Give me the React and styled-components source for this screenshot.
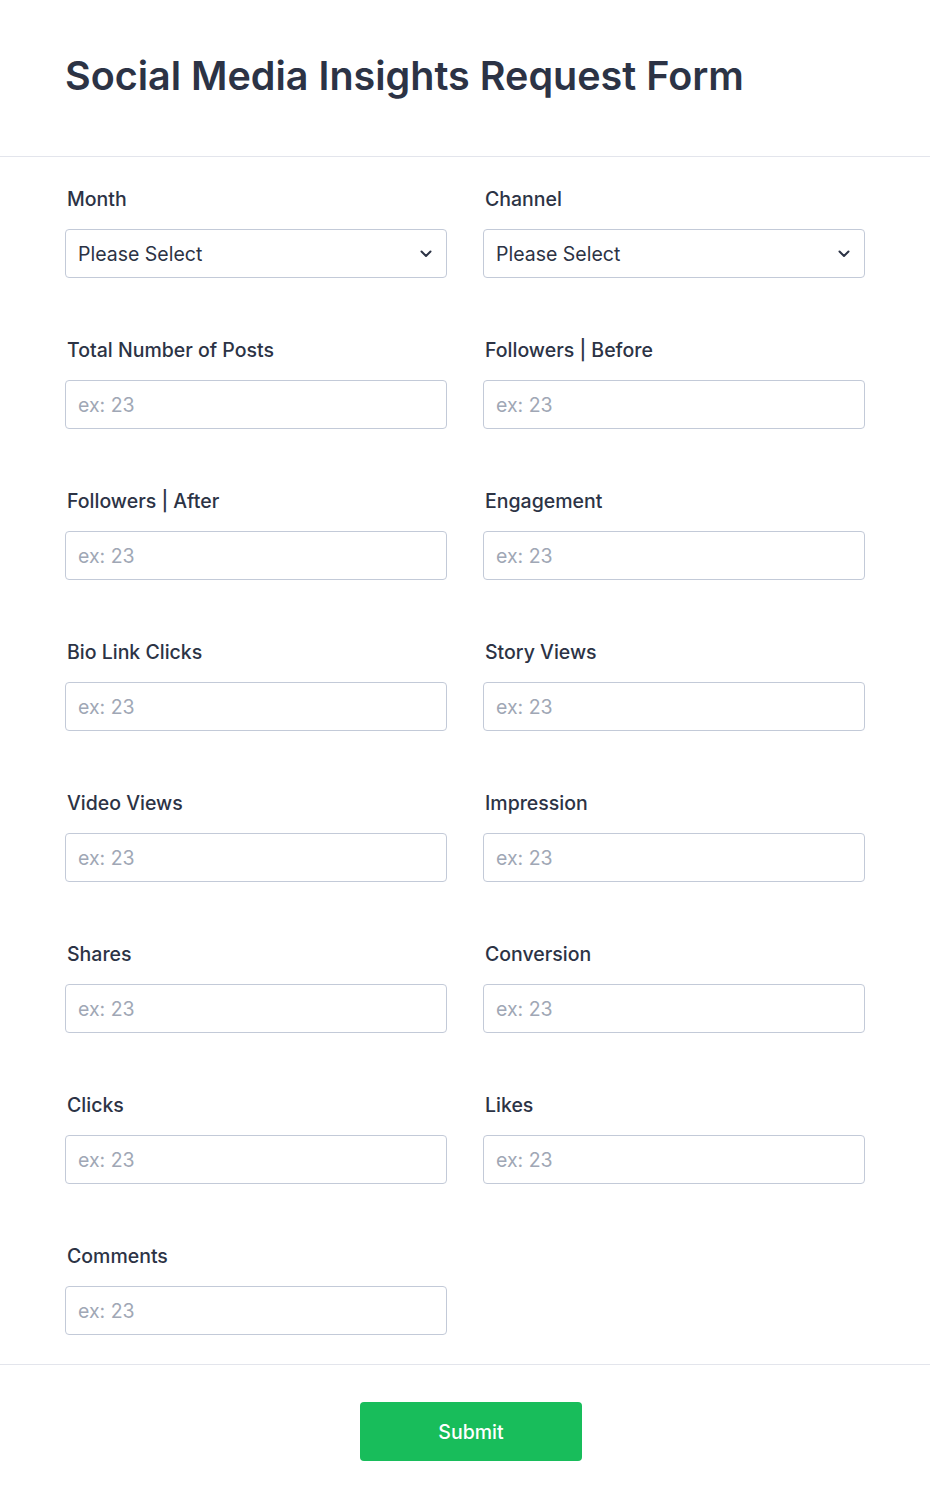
import React from "react";
import styled, { createGlobalStyle } from "styled-components";

const Global = createGlobalStyle`
  html, body { margin: 0; padding: 0; background: #fff; }
  body { font-family: Inter, "Noto Sans", sans-serif; color: #2c3345; }
  * { box-sizing: border-box; }
`;

const Page = styled.div`
  width: 930px;
  min-height: 1511px;
  background: #fff;
`;

const Header = styled.header`
  padding: 49px 65px 53px;
  border-bottom: 1px solid #e3e5ec;
`;

const Title = styled.h1`
  margin: 0;
  font-size: 39.5px;
  line-height: 54px;
  font-weight: 600;
  color: #2c3345;
`;

const Grid = styled.div`
  display: grid;
  grid-template-columns: 382px 382px;
  column-gap: 36px;
  row-gap: 60px;
  padding: 30px 65px 29px;
  border-bottom: 1px solid #e3e5ec;
`;

const Field = styled.div`
  display: flex;
  flex-direction: column;
  gap: 18px;
`;

const Label = styled.label`
  font-size: 19.5px;
  line-height: 24px;
  font-weight: 480;
  color: #2c3345;
  padding-left: 2px;
`;

const Input = styled.input`
  width: 100%;
  height: 49px;
  border: 1px solid #c3cad8;
  border-radius: 4px;
  padding: 0 12px;
  font-family: Inter, "Noto Sans", sans-serif;
  font-size: 19.5px;
  color: #2c3345;
  background: #fff;
  outline: none;
  &::placeholder { color: #a0a7b5; }
`;

const SelectBox = styled.div`
  height: 49px;
  border: 1px solid #c3cad8;
  border-radius: 4px;
  padding: 0 14px 0 12px;
  display: flex;
  align-items: center;
  justify-content: space-between;
  font-size: 19.5px;
  color: #2c3345;
  background: #fff;
`;

const Footer = styled.div`
  display: flex;
  justify-content: center;
  padding: 37px 0 50px 12px;
`;

const Button = styled.button`
  width: 222px;
  height: 59px;
  border: none;
  border-radius: 4px;
  background: #18bd5b;
  color: #fff;
  font-family: Inter, "Noto Sans", sans-serif;
  font-size: 19.5px;
  font-weight: 480;
  cursor: pointer;
`;

const Chevron = () => (
  <svg width="12" height="8" viewBox="0 0 12 8" fill="none">
    <path d="M1.5 1.5 L6 6 L10.5 1.5" stroke="#2c3345" strokeWidth="2" strokeLinecap="round" strokeLinejoin="round" />
  </svg>
);

const fields = [
  "Total Number of Posts",
  "Followers | Before",
  "Followers | After",
  "Engagement",
  "Bio Link Clicks",
  "Story Views",
  "Video Views",
  "Impression",
  "Shares",
  "Conversion",
  "Clicks",
  "Likes",
  "Comments",
];

export default function App() {
  return (
    <Page>
      <Global />
      <Header>
        <Title>Social Media Insights Request Form</Title>
      </Header>
      <Grid>
        {["Month", "Channel"].map((l) => (
          <Field key={l}>
            <Label>{l}</Label>
            <SelectBox>
              <span>Please Select</span>
              <Chevron />
            </SelectBox>
          </Field>
        ))}
        {fields.map((l) => (
          <Field key={l}>
            <Label>{l}</Label>
            <Input placeholder="ex: 23" />
          </Field>
        ))}
      </Grid>
      <Footer>
        <Button>Submit</Button>
      </Footer>
    </Page>
  );
}
